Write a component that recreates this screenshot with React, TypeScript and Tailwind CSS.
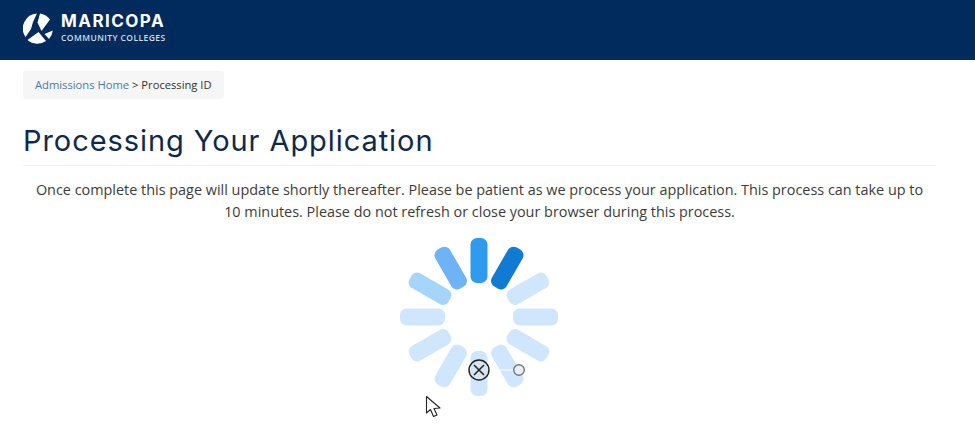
export default function App() {
  const bars = [
    { a: 0, c: "#2f9bef" },
    { a: 30, c: "#117ad2" },
    { a: 60, c: "#d0e6fd" },
    { a: 90, c: "#d0e6fd" },
    { a: 120, c: "#d0e6fd" },
    { a: 150, c: "#d0e6fd" },
    { a: 180, c: "#d0e6fd" },
    { a: 210, c: "#d0e6fd" },
    { a: 240, c: "#d0e6fd" },
    { a: 270, c: "#d0e6fd" },
    { a: 300, c: "#a5d5f8" },
    { a: 330, c: "#6db3f5" },
  ];
  return (
    <div className="h-[432px] w-[975px] overflow-hidden bg-white font-['Open_Sans',sans-serif]">
      <header className="flex h-[60px] items-center bg-[#002b5c] pl-[23px]">
        <svg width="30" height="31" viewBox="0 0 30 31" className="mr-[8px] mt-[-3px]">
          <path d="M14 0.5 A15 15 0 0 0 2.5 24 L8 16 L10 9 Z" fill="#fff" />
          <path d="M17 0.6 A15 15 0 0 1 27 6.5 L18.5 18 L14.5 9.5 Z" fill="#fff" />
          <path d="M4.5 27 L15.5 19 L23 28 A15 15 0 0 1 4.5 27 Z" fill="#fff" />
          <path d="M29.8 17.5 A15 15 0 0 1 26 26 L21.5 21 Z" fill="#fff" />
        </svg>
        <div className="mt-[-5px] whitespace-nowrap text-white">
          <div className="font-['Inter',sans-serif] text-[17px] font-bold leading-[21px] tracking-[1.45px]">MARICOPA</div>
          <div className="font-['Open_Sans',sans-serif] text-[8.5px] font-semibold leading-[12px] tracking-[0.42px] text-[#d5dce6]">COMMUNITY COLLEGES</div>
        </div>
      </header>
      <main className="ml-[23px] w-[913px] pt-[11px]">
        <nav className="flex h-[28px] w-[201px] items-center whitespace-nowrap rounded-[4px] bg-[#f6f6f6] pl-[12px] text-[11.2px] text-[#333]">
          <span className="text-[#4a79b5]">Admissions Home</span>
          <span className="ml-[3px]">&gt; Processing ID</span>
        </nav>
        <h1 className="mt-[24px] border-b border-[#f1f1f1] pb-[6px] font-['Inter',sans-serif] text-[29px] font-normal leading-[36px] tracking-[0.93px] text-[#10294a]">
          Processing Your Application
        </h1>
        <p className="mt-[13px] px-[10px] text-center text-[14.42px] leading-[22px] text-[#3c3c3c]">
          Once complete this page will update shortly thereafter. Please be patient as we process your application. This process can take up to 10 minutes. Please do not refresh or close your browser during this process.
        </p>
        <div className="relative mx-auto mt-[14px] h-[160px] w-[160px]">
          <svg width="160" height="160" viewBox="0 0 160 160" className="ml-[-1px]">
            {bars.map((b) => (
              <rect key={b.a} x="71.5" y="1" width="17" height="45" rx="6.5" fill={b.c} transform={`rotate(${b.a} 80 80)`} />
            ))}
          </svg>
          <svg width="24" height="24" viewBox="0 0 24 24" className="absolute left-[67px] top-[121px]">
            <circle cx="12" cy="12" r="10" fill="#d8e5f2" stroke="#222" strokeWidth="1.4" />
            <path d="M7 7 L17 17 M17 7 L7 17" stroke="#222" strokeWidth="1.5" />
          </svg>
          <svg width="30" height="16" viewBox="0 0 30 16" className="absolute left-[96px] top-[125px]">
            <path d="M4 8 H17" stroke="#fff" strokeWidth="1" />
            <circle cx="23" cy="8" r="5.3" fill="#e8eef4" stroke="#777" strokeWidth="1.4" />
          </svg>
          <svg width="18" height="26" viewBox="0 0 18 26" className="absolute left-[25px] top-[158px]">
            <path d="M1.5 1.5 V18 L5.5 14.5 L8.5 21.5 L12 20 L9 13.5 L15 13 Z" fill="#fff" stroke="#222" strokeWidth="1.1" strokeLinejoin="round" />
          </svg>
        </div>
      </main>
    </div>
  );
}
